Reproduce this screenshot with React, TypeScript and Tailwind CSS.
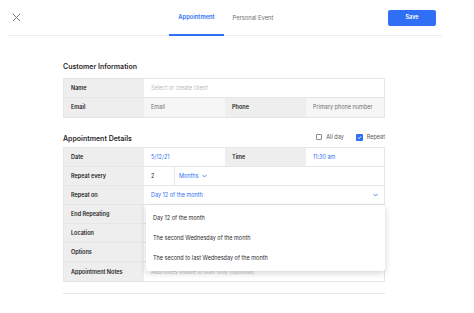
export default function App() {
  const cellLabel = "flex items-center bg-[#eeeeee] px-[7px] text-[5.5px] font-semibold text-[#1f1f1f]"
  const cellValue = "flex items-center bg-white px-[7px] text-[5.5px]"

  return (
    <div className="h-[313px] w-[474px] bg-white font-['Inter',sans-serif]">
      <header className="ml-[8px] flex h-[36px] w-[434px] items-stretch border-b border-[#ededed]">
        <div className="flex w-[161px] items-center pl-[4px]">
          <svg width="9" height="9" viewBox="0 0 10 10" fill="none" stroke="#6b6b6b" strokeWidth="1">
            <path d="M1 1 L9 9 M9 1 L1 9" />
          </svg>
        </div>
        <div className="-mb-px flex w-[55px] items-center justify-center border-b-2 border-[#2f6ff3] text-[5.8px] font-semibold text-[#2f6ff3]">
          Appointment
        </div>
        <div className="-mb-px flex w-[58px] items-center justify-center text-[5.8px] text-[#6f6f6f]">Personal Event</div>
        <div className="flex-1" />
        <div className="flex items-center pr-[6px]">
          <button className="h-[16px] w-[48px] rounded-[2px] bg-[#2f6ff6] text-[5.5px] font-semibold text-white">Save</button>
        </div>
      </header>

      <main className="ml-[63px] w-[322px]">
        <h2 className="mt-[26px] text-[7px] font-semibold leading-[10px] text-[#2a2a2a]">Customer Information</h2>
        <div className="mt-[6px] border border-[#e6e6e6]">
          <div className="grid h-[19px] grid-cols-[80px_1fr] border-b border-[#e6e6e6]">
            <div className={cellLabel}>Name</div>
            <div className={cellValue + " text-[#b9b9b9]"}>Select or create client</div>
          </div>
          <div className="grid h-[19px] grid-cols-[80px_81px_81px_1fr]">
            <div className={cellLabel}>Email</div>
            <div className="flex items-center bg-[#f6f6f6] px-[7px] text-[5.5px] text-[#6f6f6f]">Email</div>
            <div className={cellLabel}>Phone</div>
            <div className="flex items-center bg-[#f6f6f6] px-[7px] text-[5.5px] text-[#6f6f6f]">Primary phone number</div>
          </div>
        </div>

        <div className="mt-[15px] flex items-end justify-between">
          <h2 className="text-[7px] font-semibold leading-[10px] text-[#2a2a2a]">Appointment Details</h2>
          <div className="mb-[3px] flex items-center text-[5.5px] text-[#555]">
            <span className="h-[6px] w-[6px] rounded-[1px] border border-[#8a8a8a] bg-white" />
            <span className="ml-[4px]">All day</span>
            <span className="ml-[12px] flex h-[7px] w-[7px] items-center justify-center rounded-[1px] bg-[#2f6ff3]">
              <svg width="5" height="5" viewBox="0 0 10 10" fill="none" stroke="white" strokeWidth="2">
                <path d="M2 5 L4.2 7.2 L8 2.8" />
              </svg>
            </span>
            <span className="ml-[4px]">Repeat</span>
          </div>
        </div>

        <div className="relative mt-[3px] border border-[#e6e6e6]">
          <div className="grid h-[19px] grid-cols-[80px_81px_81px_1fr] border-b border-[#e6e6e6]">
            <div className={cellLabel}>Date</div>
            <div className={cellValue + " text-[#2f6ff3]"}>5/12/21</div>
            <div className={cellLabel}>Time</div>
            <div className={cellValue + " text-[#2f6ff3]"}>11:30 am</div>
          </div>
          <div className="grid h-[19px] grid-cols-[80px_31px_1fr] border-b border-[#e6e6e6]">
            <div className={cellLabel}>Repeat every</div>
            <div className={cellValue + " border-r border-[#e6e6e6] text-[#2a2a2a]"}>2</div>
            <div className="flex items-center bg-white px-[4px] text-[5.5px] text-[#2f6ff3]">
              Months
              <svg className="ml-[4px]" width="5" height="4" viewBox="0 0 10 6" fill="none" stroke="#2f6ff3" strokeWidth="1.6">
                <path d="M1 1 L5 5 L9 1" />
              </svg>
            </div>
          </div>
          <div className="grid h-[19px] grid-cols-[80px_1fr] border-b border-[#e6e6e6]">
            <div className={cellLabel}>Repeat on</div>
            <div className={cellValue + " justify-between text-[#2f6ff3]"}>
              Day 12 of the month
              <svg className="mr-[-1px]" width="5" height="4" viewBox="0 0 10 6" fill="none" stroke="#2f6ff3" strokeWidth="1.6">
                <path d="M1 1 L5 5 L9 1" />
              </svg>
            </div>
          </div>
          <div className="grid h-[19px] grid-cols-[80px_1fr] border-b border-[#e6e6e6]">
            <div className={cellLabel}>End Repeating</div>
            <div className={cellValue} />
          </div>
          <div className="grid h-[19px] grid-cols-[80px_1fr] border-b border-[#e6e6e6]">
            <div className={cellLabel}>Location</div>
            <div className={cellValue} />
          </div>
          <div className="grid h-[19px] grid-cols-[80px_1fr] border-b border-[#e6e6e6]">
            <div className={cellLabel}>Options</div>
            <div className={cellValue} />
          </div>
          <div className="grid h-[19px] grid-cols-[80px_1fr]">
            <div className={cellLabel}>Appointment Notes</div>
            <div className={cellValue + " text-[#c4c4c4]"}>Add notes visible to staff only (optional)</div>
          </div>

          <div className="absolute left-[82px] top-[57px] w-[239px] rounded-[2px] bg-white pt-[3px] pb-[3px] text-[5.5px] text-[#2a2a2a] shadow-[0_2px_6px_rgba(0,0,0,0.18)]">
            <div className="flex h-[20px] items-center px-[7px]">Day 12 of the month</div>
            <div className="flex h-[20px] items-center px-[7px]">The second Wednesday of the month</div>
            <div className="flex h-[20px] items-center px-[7px]">The second to last Wednesday of the month</div>
          </div>
        </div>

        <div className="mt-[11px] border-t border-[#e6e6e6]" />
      </main>
    </div>
  )
}
